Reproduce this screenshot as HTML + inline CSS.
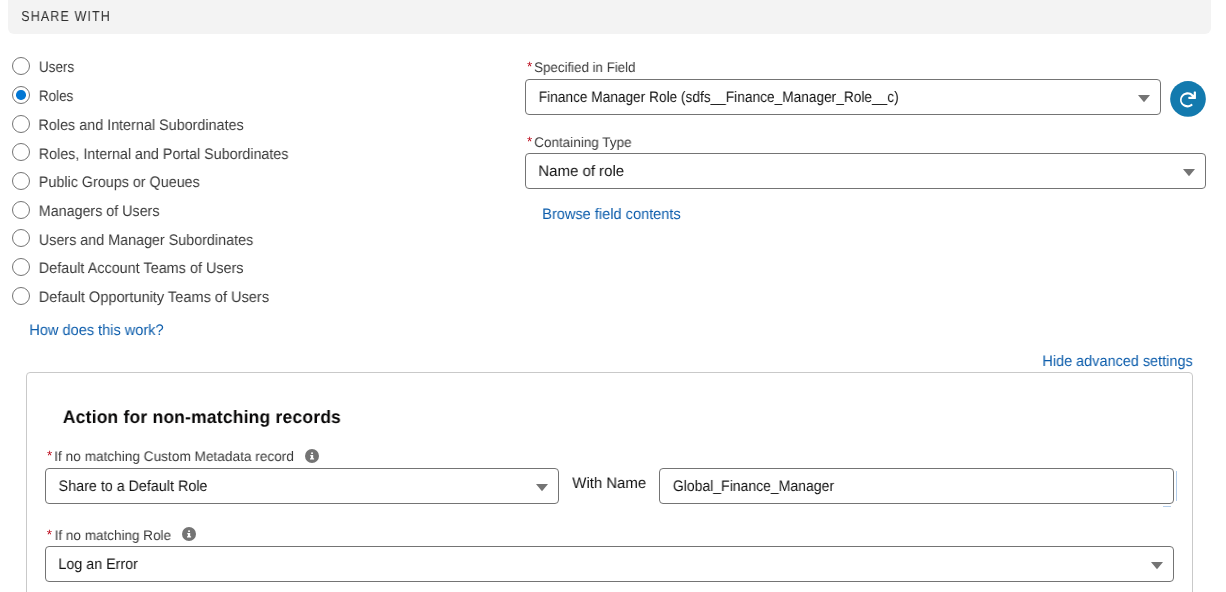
<!DOCTYPE html><html><head><meta charset="utf-8"><style>
*{box-sizing:border-box;margin:0;padding:0}
html,body{width:1226px;height:592px;overflow:hidden;background:#fff}
body{position:relative;font-family:"Liberation Sans",sans-serif}
.t{position:absolute;white-space:nowrap;line-height:20px;will-change:transform;text-rendering:geometricPrecision;transform-origin:0 0}
.box{position:absolute;border:1px solid #747474;border-radius:4px;background:#fff}
.radio{position:absolute;width:18px;height:18px;border:1px solid #747474;border-radius:50%;background:#fff}
</style></head><body>
<div style="position:absolute;left:8px;top:-5px;width:1203px;height:38.5px;background:#f3f3f3;border-radius:6px"></div>
<div class="radio" style="left:12px;top:57px"></div>
<div class="radio" style="left:12px;top:86px"></div>
<div class="radio" style="left:12px;top:115px"></div>
<div class="radio" style="left:12px;top:143px"></div>
<div class="radio" style="left:12px;top:172px"></div>
<div class="radio" style="left:12px;top:201px"></div>
<div class="radio" style="left:12px;top:229px"></div>
<div class="radio" style="left:12px;top:258px"></div>
<div class="radio" style="left:12px;top:287px"></div>
<div style="position:absolute;left:16.3px;top:90.35px;width:9.5px;height:9.5px;border-radius:50%;background:#0176d3"></div>
<div class="box" style="left:525px;top:79px;width:636px;height:36px"></div>
<div class="box" style="left:525px;top:153px;width:681px;height:36px"></div>
<div class="box" style="left:45px;top:468px;width:514px;height:36px"></div>
<div class="box" style="left:659px;top:468px;width:515px;height:36px"></div>
<div class="box" style="left:45px;top:546px;width:1129px;height:36px"></div>
<svg style="position:absolute;left:0;top:0;overflow:visible" width="1" height="1"><polygon points="1138.00,94.90 1150.00,94.90 1144.00,102.30" fill="#747474"/></svg>
<svg style="position:absolute;left:0;top:0;overflow:visible" width="1" height="1"><polygon points="1183.00,168.90 1195.00,168.90 1189.00,176.30" fill="#747474"/></svg>
<svg style="position:absolute;left:0;top:0;overflow:visible" width="1" height="1"><polygon points="536.00,483.90 548.00,483.90 542.00,491.30" fill="#747474"/></svg>
<svg style="position:absolute;left:0;top:0;overflow:visible" width="1" height="1"><polygon points="1151.00,561.90 1163.00,561.90 1157.00,569.30" fill="#747474"/></svg>
<div style="position:absolute;left:26px;top:372px;width:1167px;height:300px;border:1px solid #c9c9c9;border-radius:4px"></div>
<svg style="position:absolute;left:1170px;top:81px" width="36" height="36" viewBox="0 0 36 36"><circle cx="18" cy="17.9" r="17.85" fill="#137aae"/>
<g transform="translate(8.62,9.06) scale(0.36)"><path fill="#fff" d="M46.5 4h-3C42.7 4 42 4.7 42 5.5v7c0 .9-.5 1.3-1.2.7-.3-.4-.6-.7-1-1-5-5-12-7.1-19.2-5.7-2.5.5-4.9 1.5-7 2.9-6.1 4-9.6 10.5-9.7 17.5-.1 5.4 2 10.8 5.8 14.7 4 4.2 9.4 6.5 15.2 6.5 5.1 0 9.9-1.8 13.7-5 .7-.6.7-1.6.1-2.2l-2.1-2.1c-.5-.5-1.4-.6-2-.1-3.6 3-8.5 4.2-13.4 3.1-1.3-.3-2.7-.8-3.9-1.5C11 37 8.5 32.7 8.4 28.1c-.1-3.5 1-6.9 3.3-9.6 3.3-4 8-6.1 13-6.1 3.9 0 7.6 1.4 10.6 3.9.4.3.8.7 1.1 1.1.5.6.1 1.1-.8 1.1h-7.2c-.8 0-1.5.7-1.5 1.5v3.2c0 .8.7 1.4 1.5 1.4h18.4c.7 0 1.3-.6 1.3-1.3V5.5C48 4.7 47.3 4 46.5 4z"/></g></svg>
<svg style="position:absolute;left:304.8px;top:448.8px" width="14" height="14" viewBox="0 0 14 14"><circle cx="7" cy="7" r="7" fill="#747474"/>
<rect x="6.2" y="3.4" width="1.7" height="1.6" fill="#fff"/><path d="M5.3 6h2.9v3.2h0.9v1.4H5.0V9.2h0.9V7.3H5.3z" fill="#fff"/></svg>
<svg style="position:absolute;left:181.8px;top:526.7px" width="14" height="14" viewBox="0 0 14 14"><circle cx="7" cy="7" r="7" fill="#747474"/>
<rect x="6.2" y="3.4" width="1.7" height="1.6" fill="#fff"/><path d="M5.3 6h2.9v3.2h0.9v1.4H5.0V9.2h0.9V7.3H5.3z" fill="#fff"/></svg>
<div style="position:absolute;left:1176px;top:471px;width:1px;height:30px;background:#b3cdea"></div>
<div style="position:absolute;left:1163px;top:506px;width:8px;height:1px;background:#b3cdea"></div>
<div class="t" id="share" style="left:21px;top:7px;font-size:14.5px;color:#2f2f2f;transform:translateX(0.286px) scaleX(0.8600);letter-spacing:1.331px">SHARE WITH</div>
<div class="t" id="r0" style="left:38px;top:58px;font-size:15.25px;color:#393939;transform:translateX(0.882px) scaleX(0.8855)">Users</div>
<div class="t" id="r1" style="left:38px;top:87px;font-size:15.25px;color:#393939;transform:translateX(0.847px) scaleX(0.8843)">Roles</div>
<div class="t" id="r2" style="left:38px;top:116px;font-size:15.25px;color:#393939;transform:translateX(0.451px) scaleX(0.9421)">Roles and Internal Subordinates</div>
<div class="t" id="r3" style="left:38px;top:145px;font-size:15.25px;color:#393939;transform:translateX(0.784px) scaleX(0.9380)">Roles, Internal and Portal Subordinates</div>
<div class="t" id="r4" style="left:38px;top:173px;font-size:15.25px;color:#393939;transform:translateX(0.773px) scaleX(0.9403)">Public Groups or Queues</div>
<div class="t" id="r5" style="left:38px;top:202px;font-size:15.25px;color:#393939;transform:translateX(0.773px) scaleX(0.9369)">Managers of Users</div>
<div class="t" id="r6" style="left:38px;top:231px;font-size:15.25px;color:#393939;transform:translateX(0.847px) scaleX(0.9399)">Users and Manager Subordinates</div>
<div class="t" id="r7" style="left:38px;top:259px;font-size:15.25px;color:#393939;transform:translateX(0.788px) scaleX(0.9448)">Default Account Teams of Users</div>
<div class="t" id="r8" style="left:38px;top:288px;font-size:15.25px;color:#393939;transform:translateX(0.757px) scaleX(0.9544)">Default Opportunity Teams of Users</div>
<div class="t" id="how" style="left:29px;top:321px;font-size:15.25px;color:#0b5cab;transform:translateX(0.325px) scaleX(0.9544)">How does this work?</div>
<div class="t" id="a1" style="left:527px;top:57px;font-size:13.5px;color:#ba0517;transform:translateX(0.114px) scaleX(1.0000)">*</div>
<div class="t" id="lbl1" style="left:534px;top:57px;font-size:13.9px;color:#393939;transform:translateX(0.161px) scaleX(0.9576)">Specified in Field</div>
<div class="t" id="v1" style="left:538px;top:88px;font-size:15.25px;color:#111111;transform:translateX(0.722px) scaleX(0.8975)">Finance Manager Role (sdfs__Finance_Manager_Role__c)</div>
<div class="t" id="a2" style="left:527px;top:132px;font-size:13.5px;color:#ba0517;transform:translateX(0.114px) scaleX(1.0000)">*</div>
<div class="t" id="lbl2" style="left:534px;top:132px;font-size:13.9px;color:#393939;transform:translateX(0.247px) scaleX(0.9711)">Containing Type</div>
<div class="t" id="v2" style="left:538px;top:162px;font-size:15.25px;color:#111111;transform:translateX(0.341px) scaleX(0.9824)">Name of role</div>
<div class="t" id="browse" style="left:542px;top:205px;font-size:15.25px;color:#0b5cab;transform:translateX(0.176px) scaleX(0.9562)">Browse field contents</div>
<div class="t" id="hide" style="left:1042px;top:352px;font-size:15.25px;color:#0b5cab;transform:translateX(0.373px) scaleX(0.9482)">Hide advanced settings</div>
<div class="t" id="head" style="left:62px;top:407px;font-size:18px;color:#080707;transform:translateX(0.804px) scaleX(0.9700);letter-spacing:0.220px;font-weight:700">Action for non-matching records</div>
<div class="t" id="a3" style="left:46px;top:446px;font-size:13.5px;color:#ba0517;transform:translateX(0.882px) scaleX(1.0000)">*</div>
<div class="t" id="lbl3" style="left:54px;top:446px;font-size:13.9px;color:#393939;transform:translateX(0.263px) scaleX(0.9823)">If no matching Custom Metadata record</div>
<div class="t" id="v3" style="left:58px;top:477px;font-size:15.25px;color:#111111;transform:translateX(0.565px) scaleX(0.9390)">Share to a Default Role</div>
<div class="t" id="wn" style="left:572px;top:474px;font-size:15.25px;color:#111111;transform:translateX(0.329px) scaleX(0.9779)">With Name</div>
<div class="t" id="v4" style="left:672px;top:477px;font-size:15.25px;color:#111111;transform:translateX(0.820px) scaleX(0.9184)">Global_Finance_Manager</div>
<div class="t" id="a4" style="left:46px;top:525px;font-size:13.5px;color:#ba0517;transform:translateX(0.690px) scaleX(1.0000)">*</div>
<div class="t" id="lbl4" style="left:54px;top:525px;font-size:13.9px;color:#393939;transform:translateX(0.690px) scaleX(0.9722)">If no matching Role</div>
<div class="t" id="v5" style="left:58px;top:555px;font-size:15.25px;color:#111111;transform:translateX(0.376px) scaleX(0.9372)">Log an Error</div>
</body></html>
